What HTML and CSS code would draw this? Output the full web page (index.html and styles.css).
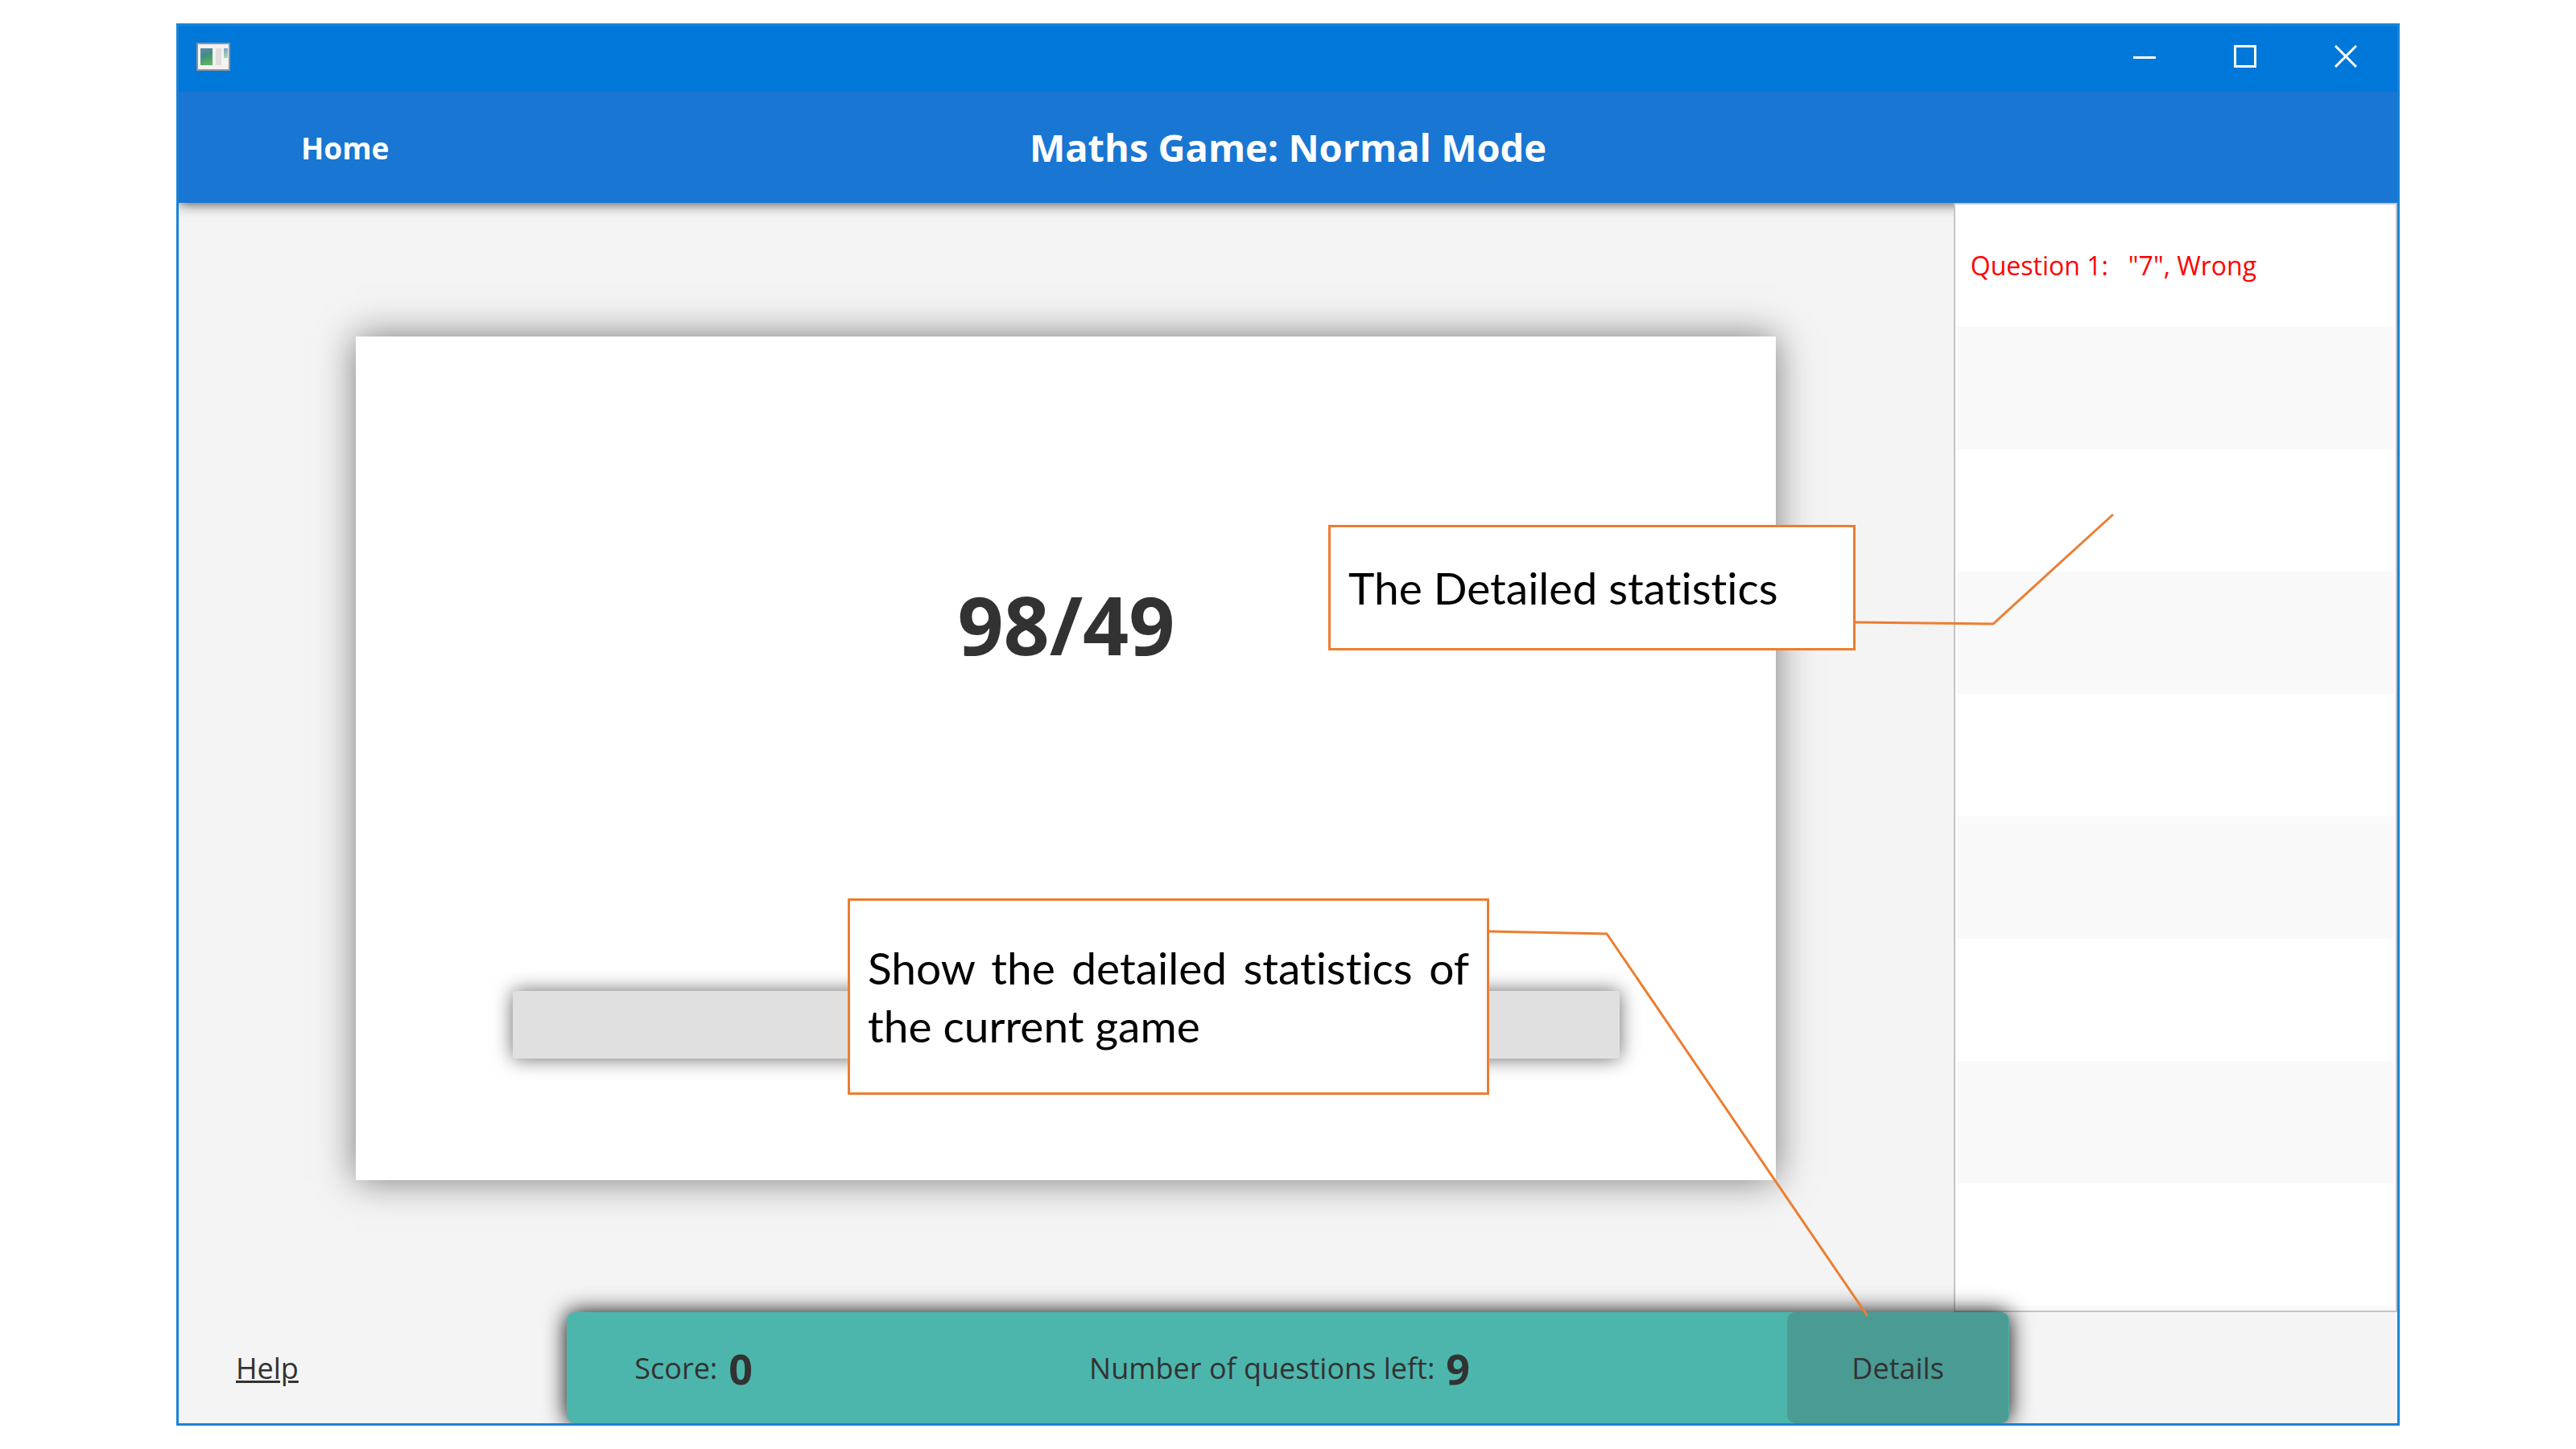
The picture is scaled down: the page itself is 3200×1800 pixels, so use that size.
FILE: index.html
```html
<!DOCTYPE html>
<html lang="en">
<head>
<meta charset="utf-8">
<title>Maths Game</title>
<link rel="stylesheet" href="styles.css">
</head>
<body>
<div class="stage">
  <div class="window">
    <div class="titlebar">
      <svg class="app-icon" viewBox="0 0 42 35" aria-hidden="true">
        <defs>
          <linearGradient id="scene" x1="0" y1="0" x2="0.3" y2="1">
            <stop offset="0" stop-color="#5f86b8"/>
            <stop offset="0.5" stop-color="#3f8f80"/>
            <stop offset="1" stop-color="#5cb062"/>
          </linearGradient>
          <linearGradient id="thumb" x1="0" y1="0" x2="0" y2="1">
            <stop offset="0" stop-color="#7f9fd0"/>
            <stop offset="1" stop-color="#a5e0a0"/>
          </linearGradient>
        </defs>
        <rect x="1" y="1" width="40" height="33" fill="#f4f1f0" stroke="#8d9499" stroke-width="2"/>
        <rect x="5" y="7" width="15" height="21" fill="url(#scene)"/>
        <rect x="24" y="7" width="7" height="21" fill="#dedede"/>
        <rect x="34" y="7" width="5" height="12" fill="url(#thumb)"/>
      </svg>
      <div class="window-controls">
        <button type="button" aria-label="Minimise"><svg viewBox="0 0 28 28"><path d="M0 15.500H28"/></svg></button>
        <button type="button" aria-label="Maximise"><svg viewBox="0 0 28 28"><rect x="1.500" y="1.500" width="25" height="25"/></svg></button>
        <button type="button" aria-label="Close"><svg viewBox="0 0 28 28"><path d="M1 1L27 27M27 1L1 27"/></svg></button>
      </div>
    </div>
    <header class="header">
      <button type="button" class="home">Home</button>
      <h1 class="title">Maths Game: Normal Mode</h1>
    </header>
    <main class="content">
      <section class="board">
        <div class="card">
          <label class="question" for="answer">98/49</label>
          <input class="answer" id="answer" type="text">
        </div>
      </section>
      <ul class="results">
        <li class="wrong">Question 1:&nbsp;&nbsp; "7", Wrong</li>
        <li></li><li></li><li></li><li></li><li></li><li></li><li></li><li></li><li></li>
      </ul>
    </main>
    <footer class="footer">
      <a class="help" href="#help">Help</a>
      <div class="scorebar">
        <p class="stat">Score: <strong>0</strong></p>
        <p class="stat">Number of questions left: <strong>9</strong></p>
        <button type="button" class="details">Details</button>
      </div>
    </footer>
  </div>

  <svg class="leaders" width="3200" height="1800" aria-hidden="true">
    <path d="M2304 773L2476 775L2625 639"/>
    <path d="M1849 1157L1996 1160L2320 1635"/>
  </svg>
  <p class="callout callout-list">The Detailed statistics</p>
  <p class="callout callout-details">Show the detailed statistics of the current game</p>
</div>
</body>
</html>
```

FILE: styles.css
```css
* {
  box-sizing: border-box;
}

body {
  margin: 0;
  background: #fff;
  color: #323232;
  font-family: "Open Sans", "Noto Sans", sans-serif;
}

button {
  margin: 0;
  padding: 0;
  border: 0;
  background: none;
  color: inherit;
  font: inherit;
  cursor: pointer;
}

p,
h1,
ul {
  margin: 0;
  padding: 0;
}

.stage {
  position: relative;
  display: flex;
  min-height: 100vh;
  padding: 29px 219px;
}

.window {
  flex: 1;
  display: flex;
  flex-direction: column;
  border: 3px solid #1883d7;
  background: #f4f4f4;
}

/* Title bar */

.titlebar {
  display: flex;
  align-items: center;
  justify-content: space-between;
  height: 82px;
  padding: 0 2px 6px 22px;
  background: #0078d9;
}

.app-icon {
  width: 42px;
  height: 35px;
}

.window-controls {
  display: flex;
}

.window-controls button {
  display: grid;
  place-items: center;
  width: 125px;
  height: 76px;
}

.window-controls svg {
  width: 28px;
  height: 28px;
  fill: none;
  stroke: #fff;
  stroke-width: 3;
}

/* Header */

.header {
  position: relative;
  z-index: 1;
  display: grid;
  grid-template-columns: 1fr auto 1fr;
  align-items: center;
  height: 138px;
  padding: 0 152px;
  background: #1976d2;
  color: #fff;
  box-shadow: 0 0 16px rgba(0, 0, 0, 0.8);
  clip-path: inset(0 0 -40px 0);
}

.home {
  justify-self: start;
  font-size: 37px;
  font-weight: 700;
}

.title {
  font-size: 47px;
  font-weight: 700;
}

/* Game board and results */

.content {
  flex: 1;
  display: flex;
}

.board {
  flex: 0 0 80%;
  display: flex;
  justify-content: center;
  padding: 166px 0 164px;
}

.card {
  display: flex;
  flex-direction: column;
  align-items: center;
  width: 80%;
  padding-bottom: 151px;
  background: #fff;
  box-shadow: 0 0 44px rgba(0, 0, 0, 0.5);
}

.question {
  flex: 1;
  display: grid;
  place-items: center;
  font-size: 100px;
  font-weight: 700;
}

.answer {
  width: 78%;
  height: 84px;
  margin-top: 100px;
  padding: 0 24px;
  border: 0;
  border-radius: 4px;
  background: #e0e0e0;
  font: inherit;
  font-size: 36px;
  text-align: center;
  box-shadow: 0 0 24px rgba(0, 0, 0, 0.6);
}

.results {
  position: relative;
  z-index: 2;
  flex: 0 0 20%;
  display: grid;
  grid-template-rows: repeat(9, 152px) 1fr;
  overflow: hidden;
  padding: 0 2px;
  border: 2px solid #c4c4c4;
  background: #fff;
  list-style: none;
}

.results li {
  padding: 0 17px;
  font-size: 32px;
  line-height: 152px;
}

.results li:nth-child(even) {
  background: #f9f9f9;
}

.results .wrong {
  color: #f00;
}

/* Footer */

.footer {
  position: relative;
  z-index: 3;
  display: grid;
  grid-template-columns: 1fr 65% 1fr;
  align-items: center;
  height: 138px;
  font-size: 36px;
  clip-path: inset(-60px 0 0 0);
}

.help {
  justify-self: start;
  margin-left: 71px;
  color: inherit;
}

.scorebar {
  display: flex;
  align-items: center;
  gap: 418px;
  height: 138px;
  padding-left: 84px;
  border-radius: 10px;
  background: #4db6ac;
  box-shadow: 0 0 28px #000;
}

.stat {
  display: flex;
  align-items: center;
  gap: 14px;
  white-space: nowrap;
}

.stat strong {
  font-size: 52px;
}

.details {
  flex: none;
  width: 275px;
  height: 138px;
  margin-left: -24px;
  border-radius: 10px;
  background: #4a9b94;
}

/* Annotations drawn over the window */

.leaders {
  position: absolute;
  z-index: 4;
  top: 0;
  left: 0;
  fill: none;
  stroke: #ed7d31;
  stroke-width: 3;
}

.callout {
  position: absolute;
  z-index: 5;
  display: flex;
  align-items: center;
  padding: 0 22px;
  border: 3px solid #ed7d31;
  background: #fff;
  color: #000;
  font-family: Lato, sans-serif;
  font-size: 55px;
  font-variant-ligatures: none;
  line-height: 72px;
  text-align: justify;
}

.callout-list {
  top: 652px;
  left: 1650px;
  width: 655px;
  height: 156px;
}

.callout-details {
  top: 1116px;
  left: 1053px;
  width: 797px;
  height: 244px;
}
```
